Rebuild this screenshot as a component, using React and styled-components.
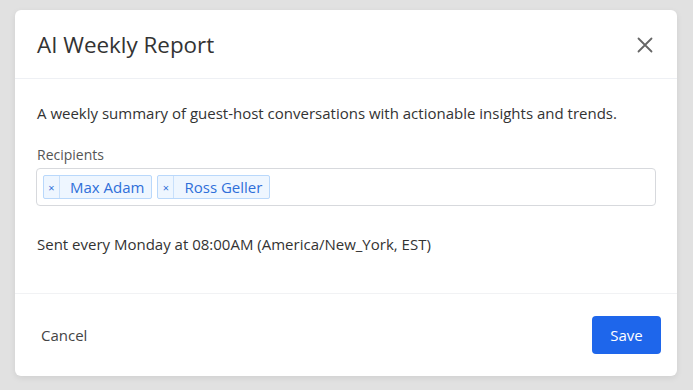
import React from "react";
import styled, { createGlobalStyle } from "styled-components";

const Global = createGlobalStyle`
  html, body { margin: 0; padding: 0; }
  body {
    background: #e1e1e1;
    font-family: "Open Sans", "Noto Sans", sans-serif;
    color: #333;
  }
`;

const Page = styled.div`
  width: 693px;
  height: 390px;
  box-sizing: border-box;
  padding: 10px 16px 14px 15px;
  display: flex;
`;

const Dialog = styled.div`
  flex: 1;
  background: #fff;
  border-radius: 6px;
  box-shadow: 0 2px 6px rgba(0, 0, 0, 0.08);
  display: flex;
  flex-direction: column;
`;

const Header = styled.div`
  height: 69px;
  box-sizing: border-box;
  border-bottom: 1px solid #eef0f4;
  display: flex;
  align-items: center;
  justify-content: space-between;
  padding: 1px 22px 0 22px;
`;

const Title = styled.h2`
  margin: 0;
  font-size: 22.4px;
  font-weight: 400;
  color: #333;
  letter-spacing: 0;
`;

const CloseButton = styled.button`
  border: 0;
  background: transparent;
  padding: 0;
  width: 20px;
  height: 20px;
  display: flex;
  align-items: center;
  justify-content: center;
  cursor: pointer;
`;

const Body = styled.div`
  flex: 1;
  padding: 24px 21px 0 21px;
  border-bottom: 1px solid #f1f2f4;
  display: flex;
  flex-direction: column;
`;

const Description = styled.p`
  margin: 0 0 0 1px;
  font-size: 15px;
  line-height: 20px;
  color: #333;
`;

const Label = styled.div`
  margin: 23px 0 0 1px;
  font-size: 14px;
  line-height: 18px;
  color: #555;
`;

const TagInput = styled.div`
  margin-top: 4px;
  height: 38px;
  box-sizing: border-box;
  border: 1px solid #d7d9dd;
  border-radius: 4px;
  display: flex;
  align-items: center;
  gap: 5px;
  padding: 0 6px;
`;

const Tag = styled.div`
  display: flex;
  align-items: stretch;
  height: 24px;
  box-sizing: border-box;
  border: 1px solid #b9d8fb;
  background: #eef6ff;
  border-radius: 2px;
  color: #2f6fd9;
`;

const TagRemove = styled.span`
  width: 15px;
  display: flex;
  align-items: center;
  justify-content: center;
  font-size: 11px;
  border-right: 1px solid #c8e0fb;
`;

const TagLabel = styled.span`
  display: flex;
  align-items: center;
  padding: 0 7px 0 10px;
  font-size: 15px;
`;

const Schedule = styled.p`
  margin: 28px 0 0 1px;
  font-size: 15px;
  line-height: 20px;
  color: #333;
`;

const Footer = styled.div`
  height: 82px;
  display: flex;
  align-items: center;
  justify-content: space-between;
  padding: 0 16px 0 26px;
`;

const CancelButton = styled.button`
  border: 0;
  background: transparent;
  padding: 0;
  font-family: inherit;
  font-size: 15px;
  color: #444;
  cursor: pointer;
`;

const SaveButton = styled.button`
  width: 69px;
  height: 38px;
  border: 0;
  border-radius: 4px;
  background: #1e66eb;
  color: #fff;
  font-family: inherit;
  font-size: 15px;
  cursor: pointer;
`;

const recipients = ["Max Adam", "Ross Geller"];

export default function App() {
  return (
    <>
      <Global />
      <Page>
        <Dialog>
          <Header>
            <Title>AI Weekly Report</Title>
            <CloseButton aria-label="Close">
              <svg width="16" height="16" viewBox="0 0 16 16">
                <path d="M1.5 1.5 L14.5 14.5 M14.5 1.5 L1.5 14.5" stroke="#666" strokeWidth="1.8" strokeLinecap="round" />
              </svg>
            </CloseButton>
          </Header>
          <Body>
            <Description>
              A weekly summary of guest-host conversations with actionable insights and trends.
            </Description>
            <Label>Recipients</Label>
            <TagInput>
              {recipients.map((r) => (
                <Tag key={r}>
                  <TagRemove>×</TagRemove>
                  <TagLabel>{r}</TagLabel>
                </Tag>
              ))}
            </TagInput>
            <Schedule>Sent every Monday at 08:00AM (America/New_York, EST)</Schedule>
          </Body>
          <Footer>
            <CancelButton>Cancel</CancelButton>
            <SaveButton>Save</SaveButton>
          </Footer>
        </Dialog>
      </Page>
    </>
  );
}
